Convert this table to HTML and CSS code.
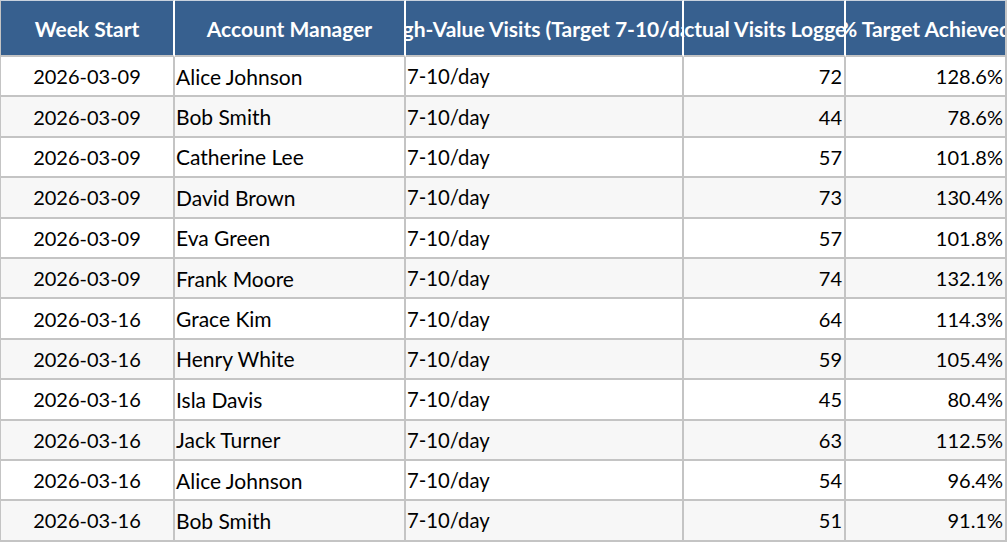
FILE: index.html
```html
<!DOCTYPE html>
<html lang="en">
<head>
<meta charset="utf-8">
<title>High-Value Visits</title>
<link rel="stylesheet" href="styles.css">
</head>
<body>
<table class="sheet">
  <colgroup>
    <col class="c-week">
    <col class="c-mgr">
    <col class="c-target">
    <col class="c-actual">
    <col class="c-pct">
  </colgroup>
  <thead>
    <tr>
      <th><div class="clip">Week Start</div></th>
      <th><div class="clip">Account Manager</div></th>
      <th><div class="clip">High-Value Visits (Target 7-10/day)</div></th>
      <th><div class="clip">Actual Visits Logged</div></th>
      <th><div class="clip">% Target Achieved</div></th>
    </tr>
  </thead>
  <tbody>
    <tr><td class="ctr">2026-03-09</td><td class="txt">Alice Johnson</td><td class="tgt">7-10/day</td><td class="num">72</td><td class="num">128.6%</td></tr>
    <tr><td class="ctr">2026-03-09</td><td class="txt">Bob Smith</td><td class="tgt">7-10/day</td><td class="num">44</td><td class="num">78.6%</td></tr>
    <tr><td class="ctr">2026-03-09</td><td class="txt">Catherine Lee</td><td class="tgt">7-10/day</td><td class="num">57</td><td class="num">101.8%</td></tr>
    <tr><td class="ctr">2026-03-09</td><td class="txt">David Brown</td><td class="tgt">7-10/day</td><td class="num">73</td><td class="num">130.4%</td></tr>
    <tr><td class="ctr">2026-03-09</td><td class="txt">Eva Green</td><td class="tgt">7-10/day</td><td class="num">57</td><td class="num">101.8%</td></tr>
    <tr><td class="ctr">2026-03-09</td><td class="txt">Frank Moore</td><td class="tgt">7-10/day</td><td class="num">74</td><td class="num">132.1%</td></tr>
    <tr><td class="ctr">2026-03-16</td><td class="txt">Grace Kim</td><td class="tgt">7-10/day</td><td class="num">64</td><td class="num">114.3%</td></tr>
    <tr><td class="ctr">2026-03-16</td><td class="txt">Henry White</td><td class="tgt">7-10/day</td><td class="num">59</td><td class="num">105.4%</td></tr>
    <tr><td class="ctr">2026-03-16</td><td class="txt">Isla Davis</td><td class="tgt">7-10/day</td><td class="num">45</td><td class="num">80.4%</td></tr>
    <tr><td class="ctr">2026-03-16</td><td class="txt">Jack Turner</td><td class="tgt">7-10/day</td><td class="num">63</td><td class="num">112.5%</td></tr>
    <tr><td class="ctr">2026-03-16</td><td class="txt">Alice Johnson</td><td class="tgt">7-10/day</td><td class="num">54</td><td class="num">96.4%</td></tr>
    <tr><td class="ctr">2026-03-16</td><td class="txt">Bob Smith</td><td class="tgt">7-10/day</td><td class="num">51</td><td class="num">91.1%</td></tr>
  </tbody>
</table>
</body>
</html>
```

FILE: styles.css
```css
html, body {
  margin: 0;
  padding: 0;
  background: #ffffff;
}

body {
  font-family: "Lato", "Noto Sans", sans-serif;
  color: #000000;
}

.sheet {
  table-layout: fixed;
  border-collapse: separate;
  border-spacing: 0;
  width: 1007px;
  font-size: 20px;
}

.c-week { width: 175px; }
.c-mgr { width: 231px; }
.c-target { width: 278px; }
.c-actual { width: 162px; }
.c-pct { width: 161px; }

.sheet th,
.sheet td {
  box-sizing: border-box;
  border-right: 2px solid #c4c4c4;
  border-bottom: 2px solid #c4c4c4;
  white-space: nowrap;
  overflow: hidden;
  padding: 0 2px;
}

.sheet th:first-child,
.sheet td:first-child {
  border-left: 1px solid #c4c4c4;
}

.sheet thead th {
  background: #37608f;
  color: #ffffff;
  font-weight: 700;
  font-size: 21px;
  height: 57px;
  border-top: 1px solid #c8d2de;
  border-right-color: #ffffff;
  padding: 0;
  text-align: center;
}

.sheet thead th:last-child {
  border-right-color: #c4c4c4;
}

.clip {
  display: flex;
  justify-content: center;
  overflow: hidden;
  white-space: nowrap;
}

.sheet tbody tr {
  height: 40.4px;
}

.sheet tbody tr:nth-child(even) td {
  background: #f7f7f7;
}

.sheet td {
  text-align: left;
}

.sheet td.txt {
  font-size: 21px;
  padding-left: 1px;
}

.sheet td.tgt {
  font-size: 20.3px;
  padding-left: 1px;
}

.sheet td.ctr {
  text-align: center;
}

.sheet td.num {
  text-align: right;
}
```
